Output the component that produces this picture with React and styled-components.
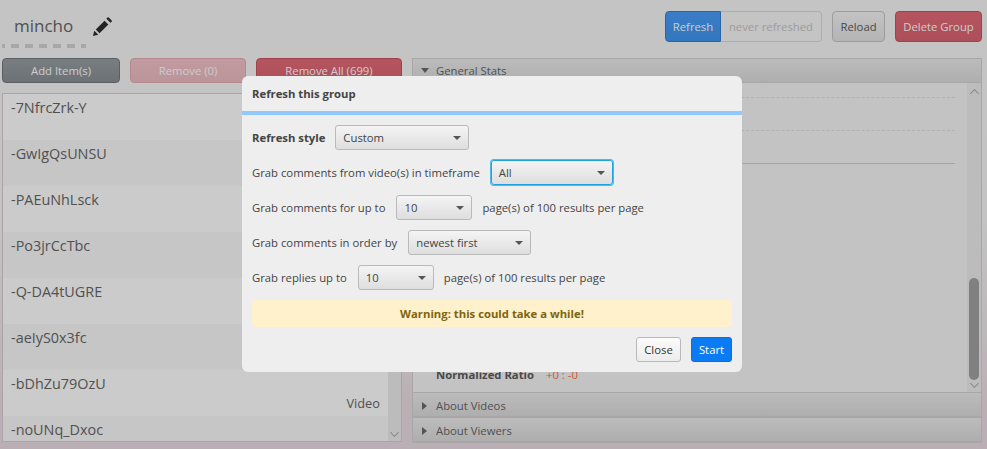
import React from "react"
import styled, { createGlobalStyle } from "styled-components"

const GlobalStyle = createGlobalStyle`
html,body{
    margin:0;
    padding:0;
    height:100%;
    overflow:hidden;
}
body{
    font-family:"Open Sans","Noto Sans","Liberation Sans",sans-serif;
    font-size:11.3px;
    color:#333;
}
`

const items = [
    { id: "-7NfrcZrk-Y" },
    { id: "-GwIgQsUNSU" },
    { id: "-PAEuNhLsck" },
    { id: "-Po3jrCcTbc" },
    { id: "-Q-DA4tUGRE" },
    { id: "-aeIyS0x3fc" },
    { id: "-bDhZu79OzU", type: "Video" },
    { id: "-noUNq_Dxoc" },
]

const Pencil = () => (
    <svg width="21" height="21" viewBox="0 0 22 22">
        <path d="M1 21l1.4-5.6 4.2 4.2z" fill="#2f2f2f" />
        <path d="M3.9 14.2L13.2 5l3.9 3.9L7.9 18.2z" fill="#2f2f2f" />
        <path d="M15 2.8l1.2-1.2q.7-.7 1.4 0l3 3q.7.7 0 1.4L19.4 7.2z" fill="#2f2f2f" />
    </svg>
)

const App = () => {
    return (
        <Page>
            <GlobalStyle />
            <TopBar>
                <TitleBlock>
                    <TitleRow>
                        <GroupName>mincho</GroupName>
                        <Pencil />
                    </TitleRow>
                </TitleBlock>
                <Actions>
                    <RefreshGroup>
                        <Btn $kind="blue" $joined $w={56}>Refresh</Btn>
                        <NeverBtn>never refreshed</NeverBtn>
                    </RefreshGroup>
                    <Btn $kind="light" $w={53}>Reload</Btn>
                    <Btn $kind="red" $w={87}>Delete Group</Btn>
                </Actions>
            </TopBar>
            <Main>
                <LeftColumn>
                    <Toolbar>
                        <ToolBtn $kind="grey" $w={118}>Add Item(s)</ToolBtn>
                        <ToolBtn $kind="pale" $w={116}>Remove (0)</ToolBtn>
                        <ToolBtn $kind="red" $w={146}>Remove All (699)</ToolBtn>
                    </Toolbar>
                    <ListBox>
                        <List>
                            {items.map((item, index) => {
                                return <Row key={item.id} $odd={index % 2 === 1}>
                                    <RowId>{item.id}</RowId>
                                    {item.type && <RowType>{item.type}</RowType>}
                                </Row>
                            })}
                        </List>
                        <ScrollBar $w={13}>
                            <Arrow $up />
                            <ScrollSpace />
                            <Arrow />
                        </ScrollBar>
                    </ListBox>
                </LeftColumn>
                <RightColumn>
                    <PaneHeader>
                        <Tri $open />
                        <span>General Stats</span>
                    </PaneHeader>
                    <PaneBody>
                        <StatArea>
                            <Dashed $top={14} />
                            <Dashed $top={32} />
                            <Solid $top={32} />
                            <RatioRow>
                                <b>Normalized Ratio</b>
                                <Ratio>+0 : -0</Ratio>
                            </RatioRow>
                        </StatArea>
                        <ScrollBar $w={14}>
                            <Arrow $up />
                            <ScrollSpace>
                                <Thumb />
                            </ScrollSpace>
                            <Arrow />
                        </ScrollBar>
                    </PaneBody>
                    <PaneHeader $low>
                        <Tri />
                        <span>About Videos</span>
                    </PaneHeader>
                    <PaneHeader $low>
                        <Tri />
                        <span>About Viewers</span>
                    </PaneHeader>
                </RightColumn>
            </Main>
            <Overlay />
            <Dialog>
                <DialogHead>Refresh this group</DialogHead>
                <DialogBody>
                    <FormRow>
                        <b>Refresh style</b>
                        <Select $w={134}>Custom<CaretShape /></Select>
                    </FormRow>
                    <FormRow>
                        <span>Grab comments from video(s) in timeframe</span>
                        <Select $w={122} $focus>All<CaretShape /></Select>
                    </FormRow>
                    <FormRow>
                        <span>Grab comments for up to</span>
                        <Select $w={76}>10<CaretShape /></Select>
                        <span>page(s) of 100 results per page</span>
                    </FormRow>
                    <FormRow>
                        <span>Grab comments in order by</span>
                        <Select $w={123}>newest first<CaretShape /></Select>
                    </FormRow>
                    <FormRow>
                        <span>Grab replies up to</span>
                        <Select $w={76}>10<CaretShape /></Select>
                        <span>page(s) of 100 results per page</span>
                    </FormRow>
                    <Warning>Warning: this could take a while!</Warning>
                    <DialogFoot>
                        <CloseBtn>Close</CloseBtn>
                        <StartBtn>Start</StartBtn>
                    </DialogFoot>
                </DialogBody>
            </Dialog>
        </Page>
    )
}

const kinds = {
    blue: { bg: "linear-gradient(#489dfa,#3f94ec)", bd: "#357ed2", fg: "#fff" },
    light: { bg: "linear-gradient(#f4f4f4,#e2e2e2)", bd: "#c4c4c4", fg: "#5a5a5a" },
    red: { bg: "linear-gradient(#e36a78,#d9636f)", bd: "#c9525e", fg: "#fff" },
    grey: { bg: "linear-gradient(#989ea2,#888e94)", bd: "#71777c", fg: "#fff" },
    pale: { bg: "linear-gradient(#f0c2c8,#ecbac1)", bd: "#e4acb4", fg: "#fff" },
}

const Page = styled.div`
position:relative;
width:987px;
height:449px;
overflow:hidden;
background:linear-gradient(#f5f5f5 0,#f4f4f4 220px,#e8dbe1 420px);
`
const TopBar = styled.header`
display:flex;
justify-content:space-between;
height:58px;
padding:11px 5px 0 2px;
box-sizing:border-box;
`
const TitleBlock = styled.div`
width:84px;
height:37px;
background:linear-gradient(90deg,#d2d2d2 0 8px,transparent 8px) 9px 100% / 14px 4px repeat-x;
`
const TitleRow = styled.div`
display:flex;
align-items:center;
gap:19px;
padding:3px 0 0 12px;
white-space:nowrap;
svg{flex:none;}
`
const GroupName = styled.span`
font-size:17px;
line-height:24px;
color:#666;
`
const Actions = styled.div`
display:flex;
gap:10px;
align-items:flex-start;
`
const RefreshGroup = styled.div`
display:flex;
`
const Btn = styled.div`
display:flex;
align-items:center;
justify-content:center;
box-sizing:border-box;
height:31px;
width:${props => props.$w}px;
border:1px solid ${props => kinds[props.$kind].bd};
border-radius:${props => props.$joined ? "4px 0 0 4px" : "4px"};
background:${props => kinds[props.$kind].bg};
color:${props => kinds[props.$kind].fg};
white-space:nowrap;
`
const NeverBtn = styled.div`
display:flex;
align-items:center;
justify-content:center;
box-sizing:border-box;
width:101px;
height:31px;
border:1px solid #d9d9d9;
border-left:none;
border-radius:0 4px 4px 0;
color:#c4c4c4;
white-space:nowrap;
`
const Main = styled.main`
display:flex;
gap:10px;
padding:0 5px 0 2px;
`
const LeftColumn = styled.section`
width:400px;
flex:none;
`
const Toolbar = styled.div`
display:flex;
gap:10px;
height:25px;
margin-bottom:10px;
`
const ToolBtn = styled(Btn)`
height:25px;
`
const ListBox = styled.div`
display:flex;
height:349px;
box-sizing:border-box;
border:1px solid #d5cdd2;
`
const List = styled.div`
flex:1;
overflow:hidden;
`
const Row = styled.div`
height:46px;
padding:0 8px;
box-sizing:border-box;
background:${props => props.$odd ? "#f8f8f8" : "#fefefe"};
`
const RowId = styled.div`
font-size:14.4px;
line-height:28px;
color:#666;
`
const RowType = styled.div`
text-align:right;
color:#666;
font-size:12.8px;
line-height:10px;
`
const ScrollBar = styled.div`
display:flex;
flex-direction:column;
align-items:center;
width:${props => props.$w}px;
flex:none;
background:#ececec;
`
const ScrollSpace = styled.div`
flex:1;
width:100%;
display:flex;
flex-direction:column;
justify-content:flex-end;
align-items:center;
`
const Thumb = styled.div`
width:10px;
height:102px;
border-radius:5px;
background:#a1a1a1;
`
const Arrow = styled.div`
width:7px;
height:7px;
margin:${props => props.$up ? "7px 0 2px" : "0 0 5px"};
box-sizing:border-box;
border-right:1px solid #aaa;
border-bottom:1px solid #aaa;
transform:${props => props.$up ? "rotate(225deg) scale(.9)" : "rotate(45deg) scale(.9)"};
`
const RightColumn = styled.section`
flex:1;
display:flex;
flex-direction:column;
border:1px solid #d5d0d3;
border-top:none;
height:385px;
box-sizing:border-box;
`
const PaneHeader = styled.div`
display:flex;
align-items:center;
height:25px;
flex:none;
box-sizing:border-box;
border:1px solid #d5d0d3;
border-width:1px 0;
padding:${props => props.$low ? "2px" : "0"} 0 0 8px;
gap:7px;
background:linear-gradient(#ebebeb,#dadada);
color:#666;
`
const Tri = styled.i`
width:0;
height:0;
${props => props.$open
        ? "border-left:4px solid transparent;border-right:4px solid transparent;border-top:5px solid #6a6a6a;"
        : "margin:0 2px 0 1px;border-top:4px solid transparent;border-bottom:4px solid transparent;border-left:5px solid #6a6a6a;"}
`
const PaneBody = styled.div`
flex:1;
display:flex;
min-height:0;
background:#f4f4f4;
`
const StatArea = styled.div`
flex:1;
padding:0 12px 0 22px;
`
const Dashed = styled.div`
height:0;
margin-top:${props => props.$top}px;
margin-bottom:18px;
border-top:1px dashed #dedede;
`
const Solid = styled.div`
height:0;
margin-top:${props => props.$top}px;
border-top:1px solid #cfcfcf;
`
const RatioRow = styled.div`
display:flex;
gap:12px;
margin-top:203px;
padding-left:1px;
color:#5c5c5c;
`
const Ratio = styled.span`
color:#ff6f3c;
`
const Overlay = styled.div`
position:absolute;
inset:0;
background:rgba(0,0,0,.2);
`
const Dialog = styled.div`
position:absolute;
left:242px;
top:76px;
width:500px;
height:296px;
border-radius:6px;
overflow:hidden;
background:#eee;
color:#444;
`
const DialogHead = styled.div`
height:35px;
padding-left:10px;
line-height:35px;
font-weight:700;
border-bottom:4px solid #90c8ff;
`
const DialogBody = styled.div`
display:flex;
flex-direction:column;
gap:10px;
padding:10px;
`
const FormRow = styled.div`
display:flex;
align-items:center;
gap:11px;
height:25px;
white-space:nowrap;
b{margin-right:-1px;}
`
const Select = styled.div`
display:flex;
align-items:center;
justify-content:space-between;
box-sizing:border-box;
width:${props => props.$w}px;
height:25px;
margin-right:-1px;
padding:0 7px 0 7px;
border:1px solid ${props => props.$focus ? "#1fa4e0" : "#b9b9b9"};
border-radius:3px;
background:linear-gradient(#f4f4f4,#dedede);
box-shadow:${props => props.$focus ? "0 0 0 1px #4db8ea" : "none"};
color:#444;
`
const CaretShape = styled.i`
width:0;
height:0;
border-left:4px solid transparent;
border-right:4px solid transparent;
border-top:4px solid #555;
`
const Warning = styled.div`
height:27px;
line-height:27px;
text-align:center;
font-weight:700;
border-radius:4px;
background:#fff1cc;
color:#80640f;
`
const DialogFoot = styled.div`
display:flex;
justify-content:flex-end;
gap:10px;
`
const CloseBtn = styled.div`
display:flex;
align-items:center;
justify-content:center;
box-sizing:border-box;
width:45px;
height:25px;
border:1px solid #b9b9b9;
border-radius:3px;
background:linear-gradient(#fbfbfb,#ececec);
color:#333;
`
const StartBtn = styled(CloseBtn)`
width:41px;
border-color:#0b6fdc;
background:#0a7bf2;
color:#fff;
`

export default App
